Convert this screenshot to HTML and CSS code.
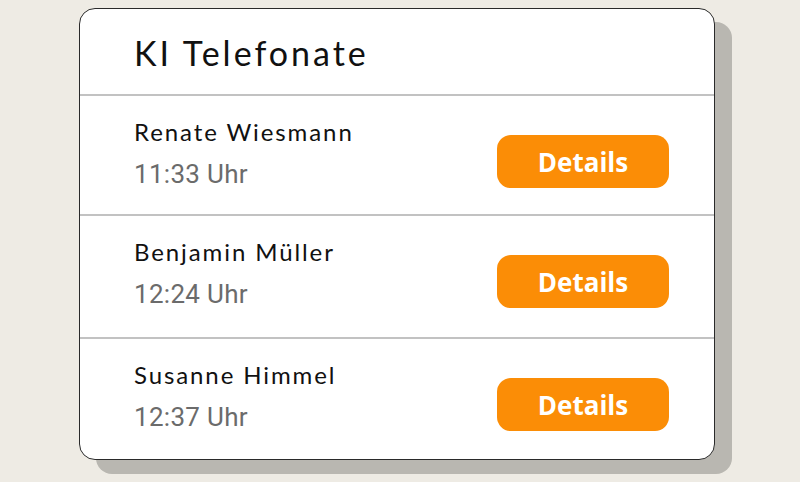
FILE: index.html
```html
<!DOCTYPE html>
<html lang="de">
<head>
<meta charset="utf-8">
<title>KI Telefonate</title>
<link rel="stylesheet" href="styles.css">
</head>
<body>
  <main class="card">
    <header class="card-header">
      <h1 class="title">KI Telefonate</h1>
    </header>
    <section class="row row-1">
      <div class="info">
        <div class="name">Renate Wiesmann</div>
        <div class="time">11:33 Uhr</div>
      </div>
      <button class="details">Details</button>
    </section>
    <section class="row row-2">
      <div class="info">
        <div class="name">Benjamin Müller</div>
        <div class="time">12:24 Uhr</div>
      </div>
      <button class="details">Details</button>
    </section>
    <section class="row row-3">
      <div class="info">
        <div class="name">Susanne Himmel</div>
        <div class="time">12:37 Uhr</div>
      </div>
      <button class="details">Details</button>
    </section>
  </main>
</body>
</html>
```

FILE: styles.css
```css
html, body {
  margin: 0;
  padding: 0;
}
body {
  background: #eeebe4;
  width: 800px;
  height: 482px;
  overflow: hidden;
  padding: 8px 0 0 79px;
  box-sizing: border-box;
  font-family: Lato, "Open Sans", sans-serif;
}
.card {
  width: 636px;
  box-sizing: border-box;
  background: #fff;
  border: 1px solid #2a2a2a;
  border-radius: 16px;
  box-shadow: 17px 14px 0 0 #b9b7b1;
}
.card-header {
  height: 85px;
  box-sizing: border-box;
  padding: 24px 0 0 54px;
}
.title {
  margin: 0;
  font-weight: 400;
  font-size: 34px;
  line-height: 40px;
  letter-spacing: 3px;
  color: #111;
}
.row {
  border-top: 2px solid #c2c2c2;
  height: 120px;
  box-sizing: border-box;
  display: flex;
  justify-content: space-between;
  align-items: flex-start;
  padding: 0 45px 0 54px;
}
.row-2 {
  height: 123px;
}
.row-3 {
  height: 122px;
}
.info {
  padding-top: 21px;
}
.name {
  font-size: 24px;
  line-height: 30px;
  letter-spacing: 1.9px;
  color: #111;
}
.time {
  margin-top: 10px;
  font-family: Roboto, sans-serif;
  font-size: 26px;
  line-height: 34px;
  letter-spacing: 0.3px;
  color: #6b6b6b;
}
.details {
  margin-top: 39px;
  width: 172px;
  height: 53px;
  border: 0;
  border-radius: 14px;
  background: #fb8d06;
  color: #fff;
  font-family: "Open Sans", sans-serif;
  font-weight: 700;
  font-size: 26px;
  display: flex;
  align-items: center;
  justify-content: center;
  padding: 0;
}
```
